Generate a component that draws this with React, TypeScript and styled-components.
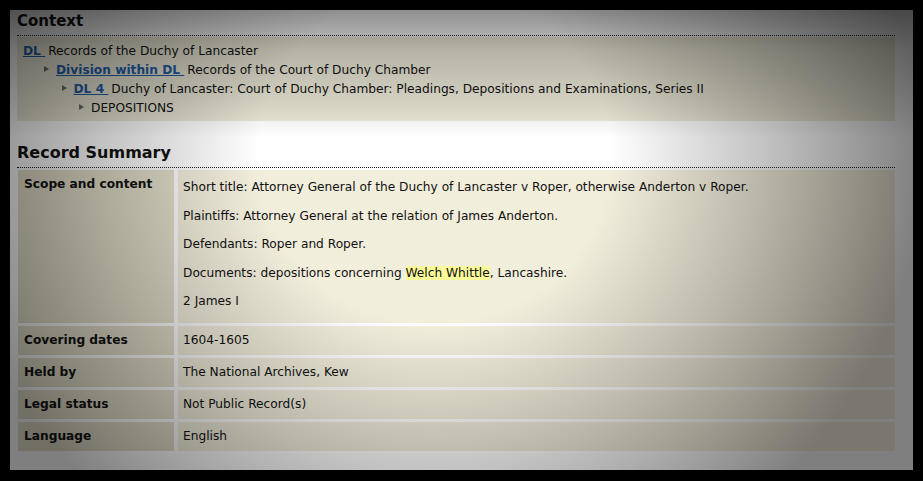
import { Fragment } from "react";
import styled, { createGlobalStyle } from "styled-components";

const GlobalStyle = createGlobalStyle`
  html, body {
    margin: 0;
    padding: 0;
    background: #000;
  }
  body {
    font-family: "DejaVu Sans", Verdana, sans-serif;
  }
`;

const Frame = styled.div`
  width: 923px;
  height: 481px;
  padding: 10px 10px 11px 10px;
  box-sizing: border-box;
  background: #000;
`;

const Page = styled.div`
  position: relative;
  width: 903px;
  height: 460px;
  box-sizing: border-box;
  padding: 0 18px 0 7px;
  background: #fff;
  overflow: hidden;
  color: #111;
  font-size: 12.2px;
`;

// the dark lens vignette lying over the whole page
const Vignette = styled.div`
  position: absolute;
  inset: 0;
  pointer-events: none;
  background:
    linear-gradient(180deg, rgba(0, 0, 0, 0.44) 0px, rgba(0, 0, 0, 0.24) 40px, rgba(0, 0, 0, 0.1) 95px, rgba(0, 0, 0, 0) 128px),
    radial-gradient(ellipse 54% 100% at 47% 32%, rgba(0, 0, 0, 0) 36%, rgba(0, 0, 0, 0.24) 68%, rgba(0, 0, 0, 0.5) 100%);
`;

const Heading = styled.h2<{ $top: number; $size: number }>`
  margin: 0;
  padding-top: ${(p) => p.$top}px;
  height: 23px;
  box-sizing: content-box;
  font-size: ${(p) => p.$size}px;
  font-weight: bold;
  line-height: 18px;
  border-bottom: 1px dotted #222;
`;

const ContextBox = styled.div`
  margin-top: 1px;
  background: #eeebd9;
  padding: 4px 6px;
  height: 76px;
`;

const CrumbRow = styled.div<{ $indent: number }>`
  display: flex;
  align-items: center;
  height: 19px;
  padding-left: ${(p) => p.$indent}px;
  white-space: nowrap;
`;

const Arrow = styled.span`
  display: inline-block;
  width: 0;
  height: 0;
  border-top: 3.5px solid transparent;
  border-bottom: 3.5px solid transparent;
  border-left: 5px solid #6e6e68;
  margin: 0 7px 2px 0;
`;

const RefLink = styled.a`
  color: #1f60aa;
  font-weight: bold;
  text-decoration: underline;
  margin-right: 3px;
  white-space: pre;
`;

const SummaryTable = styled.div`
  display: grid;
  grid-template-columns: 156px 1fr;
  gap: 3px 4px;
  margin-top: 2px;
  padding-left: 1px;
`;

const Label = styled.div<{ $tall?: boolean }>`
  background: #e4e0cb;
  font-weight: bold;
  padding: 7px 6px 0 6px;
  height: ${(p) => (p.$tall ? 153 : 29)}px;
  box-sizing: border-box;
  line-height: 14px;
`;

const Value = styled.div<{ $tall?: boolean }>`
  background: #f2eedc;
  padding: ${(p) => (p.$tall ? 10 : 7)}px 5px 0 5px;
  height: ${(p) => (p.$tall ? 153 : 29)}px;
  box-sizing: border-box;
  line-height: 14px;
`;

const Para = styled.p`
  margin: 0 0 14.5px 0;
  line-height: 14px;
`;

const Mark = styled.span`
  background: #fbfa9a;
`;

const crumbs = [
  { level: 0, ref: "DL", text: "Records of the Duchy of Lancaster" },
  { level: 1, ref: "Division within DL", text: "Records of the Court of Duchy Chamber" },
  {
    level: 2,
    ref: "DL 4",
    text: "Duchy of Lancaster: Court of Duchy Chamber: Pleadings, Depositions and Examinations, Series II",
  },
  { level: 3, ref: "", text: "DEPOSITIONS" },
];

const rows = [
  { label: "Covering dates", value: "1604-1605" },
  { label: "Held by", value: "The National Archives, Kew" },
  { label: "Legal status", value: "Not Public Record(s)" },
  { label: "Language", value: "English" },
];

export default function App() {
  return (
    <>
      <GlobalStyle />
      <Frame>
        <Page>
          <Heading $top={2} $size={15}>
            Context
          </Heading>
          <ContextBox>
            {crumbs.map((c) => (
              <CrumbRow key={c.text} $indent={c.level > 0 ? c.level * 17.5 + 3.5 : 0}>
                {c.level > 0 && <Arrow />}
                {c.ref && <RefLink href="#">{c.ref + " "}</RefLink>}
                <span>{c.text}</span>
              </CrumbRow>
            ))}
          </ContextBox>

          <Heading $top={23} $size={16}>
            Record Summary
          </Heading>
          <SummaryTable>
            <Label $tall>Scope and content</Label>
            <Value $tall>
              <Para>
                Short title: Attorney General of the Duchy of Lancaster v Roper, otherwise Anderton v
                Roper.
              </Para>
              <Para>Plaintiffs: Attorney General at the relation of James Anderton.</Para>
              <Para>Defendants: Roper and Roper.</Para>
              <Para>
                Documents: depositions concerning <Mark>Welch Whittle</Mark>, Lancashire.
              </Para>
              <Para>2 James I</Para>
            </Value>
            {rows.map((r) => (
              <Fragment key={r.label}>
                <Label>{r.label}</Label>
                <Value>{r.value}</Value>
              </Fragment>
            ))}
          </SummaryTable>
          <Vignette />
        </Page>
      </Frame>
    </>
  );
}
